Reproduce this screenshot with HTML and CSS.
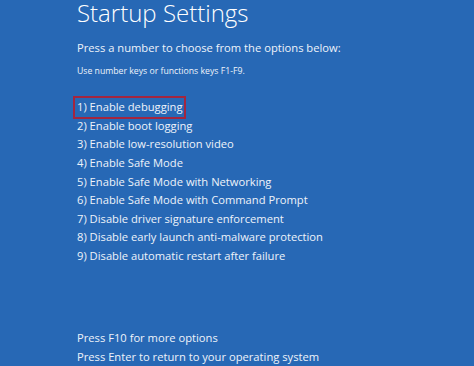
FILE: index.html
```html
<!DOCTYPE html>
<html lang="en">
<head>
    <meta charset="UTF-8">
    <meta name="viewport" content="width=device-width, initial-scale=1.0">
    <title>Startup Settings</title>
    <link rel="stylesheet" href="styles.css">
</head>
<body>
    <div id="screen">
        <h1>Startup Settings</h1>
        <p class="lead">Press a number to choose from the options below:</p>
        <p class="hint">Use number keys or functions keys F1-F9.</p>
        <ul class="options">
            <li><span class="selected">1) Enable debugging</span></li>
            <li>2) Enable boot logging</li>
            <li>3) Enable low-resolution video</li>
            <li>4) Enable Safe Mode</li>
            <li>5) Enable Safe Mode with Networking</li>
            <li>6) Enable Safe Mode with Command Prompt</li>
            <li>7) Disable driver signature enforcement</li>
            <li>8) Disable early launch anti-malware protection</li>
            <li>9) Disable automatic restart after failure</li>
        </ul>
        <div class="footer">
            <p>Press F10 for more options</p>
            <p>Press Enter to return to your operating system</p>
        </div>
    </div>
</body>
</html>
```

FILE: styles.css
```css
html, body {
    margin: 0;
    padding: 0;
    background-color: #2768b5;
}
#screen {
    height: 366px;
    padding-left: 77px;
    box-sizing: border-box;
    font-family: "Open Sans", "Noto Sans", sans-serif;
    color: #eef3fa;
    display: flex;
    flex-direction: column;
    overflow: hidden;
}
h1 {
    margin: 0;
    font-weight: 300;
    font-size: 24px;
    line-height: 25px;
    color: #ffffff;
}
.lead {
    margin: 13.7px 0 0 0;
    font-size: 11.2px;
    line-height: 18px;
}
.hint {
    margin: 7px 0 0 0;
    font-size: 8.7px;
    line-height: 14px;
}
.options {
    list-style: none;
    margin: 20.5px 0 0 0;
    padding: 0;
}
.options li {
    font-size: 11.2px;
    line-height: 18.6px;
}
.selected {
    display: inline-block;
    margin-left: -2px;
    padding: 0 1px 0 2px;
    outline: 2px solid #a3263f;
    outline-offset: -0.5px;
}
.footer {
    margin-top: auto;
}
.footer p {
    margin: 0;
    font-size: 11.2px;
    line-height: 19px;
}
```
